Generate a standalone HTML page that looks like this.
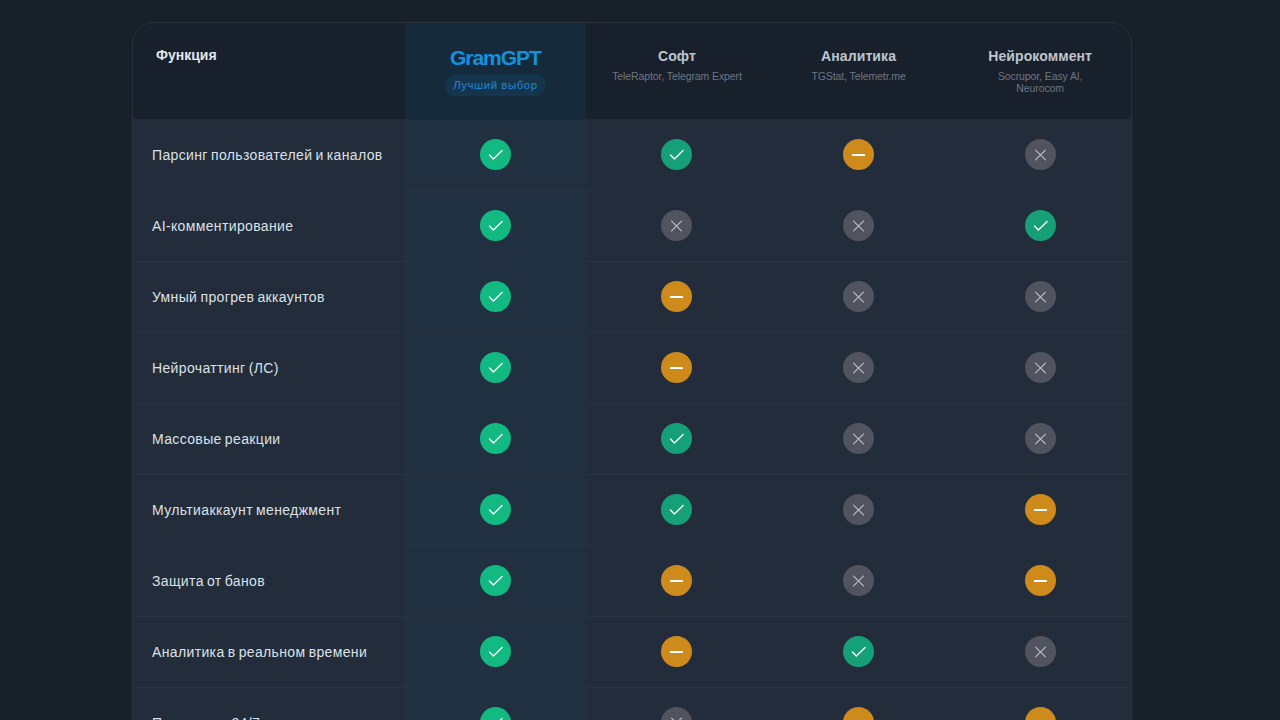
<!DOCTYPE html>
<html><head><meta charset="utf-8">
<style>
*{box-sizing:border-box;margin:0;padding:0}
html,body{width:1280px;height:720px;overflow:hidden;background:#18202a;font-family:"Liberation Sans",sans-serif}
.card{position:absolute;left:132px;top:22px;width:1000px;height:1000px;border:1px solid #2a313c;border-radius:22px;overflow:hidden;background:#222c3a}
.grid{display:grid;grid-template-columns:271.6px 181.6px 181.6px 181.6px 181.6px}
.head{background:#18202b;height:97px;border-bottom:1px solid #242b36}
.head>div{position:relative;text-align:center}
.head .f{text-align:left;padding:24px 0 0 23px;font-weight:bold;font-size:14px;color:#e4e8ee}
.head .g{background:#152a3a}
.gt{font-weight:bold;font-size:21px;letter-spacing:-1px;color:#1292de;padding-top:22px;line-height:25px}
.pill{display:inline-block;margin-top:4px;height:22px;line-height:22px;padding:0 8.5px;letter-spacing:0.5px;border-radius:11px;background:#15354c;color:#1f86d2;font-size:11.5px}
.ht{font-weight:bold;font-size:14px;letter-spacing:0.1px;color:#bec5ce;padding-top:25px;line-height:17px}
.hs{font-size:10.5px;color:#6e7682;margin-top:5px;line-height:12px;letter-spacing:-0.1px}
.row{height:71px;border-bottom:1px solid #29323f}
.row>div{display:flex;align-items:center;justify-content:center}
.row .f{justify-content:flex-start;padding-left:19px;font-size:14px;color:#dce1e7;letter-spacing:0.36px;word-spacing:-1.1px}
.row .g{background:#213040}
.ic{position:relative;top:-0.4px;width:31px;height:31px;border-radius:50%;display:flex;align-items:center;justify-content:center}
.ok1{background:#12b981}
.ok{background:#15a077}
.no{background:#51535e}
.pa{background:#cf8a1c}
</style></head><body>
<div class="card">
<div class="grid head">
 <div class="f">Функция</div>
 <div class="g"><div class="gt">GramGPT</div><div class="pill">Лучший выбор</div></div>
 <div><div class="ht">Софт</div><div class="hs">TeleRaptor, Telegram Expert</div></div>
 <div><div class="ht">Аналитика</div><div class="hs">TGStat, Telemetr.me</div></div>
 <div><div class="ht">Нейрокоммент</div><div class="hs">Socrupor, Easy AI,<br>Neurocom</div></div>
</div>
<div class="grid row"><div class="f">Парсинг пользователей и каналов</div><div class="g"><div class="ic ok1"><svg width="32" height="32" viewBox="0 0 32 32"><path d="M9.8 16 L13.8 20.2 L22.8 11.4" fill="none" stroke="#fff" stroke-width="1.35" stroke-linecap="round" stroke-linejoin="round"/></svg></div></div><div><div class="ic ok"><svg width="32" height="32" viewBox="0 0 32 32"><path d="M9.8 16 L13.8 20.2 L22.8 11.4" fill="none" stroke="#fff" stroke-width="1.35" stroke-linecap="round" stroke-linejoin="round"/></svg></div></div><div><div class="ic pa"><svg width="32" height="32" viewBox="0 0 32 32"><rect x="9.3" y="15" width="13.4" height="2.1" rx="0.6" fill="#fff"/></svg></div></div><div><div class="ic no"><svg width="32" height="32" viewBox="0 0 32 32"><path d="M10.9 10.9 L21.1 21.1 M21.1 10.9 L10.9 21.1" fill="none" stroke="#b9bcc4" stroke-width="1.25" stroke-linecap="round"/></svg></div></div></div>
<div class="grid row"><div class="f">AI-комментирование</div><div class="g"><div class="ic ok1"><svg width="32" height="32" viewBox="0 0 32 32"><path d="M9.8 16 L13.8 20.2 L22.8 11.4" fill="none" stroke="#fff" stroke-width="1.35" stroke-linecap="round" stroke-linejoin="round"/></svg></div></div><div><div class="ic no"><svg width="32" height="32" viewBox="0 0 32 32"><path d="M10.9 10.9 L21.1 21.1 M21.1 10.9 L10.9 21.1" fill="none" stroke="#b9bcc4" stroke-width="1.25" stroke-linecap="round"/></svg></div></div><div><div class="ic no"><svg width="32" height="32" viewBox="0 0 32 32"><path d="M10.9 10.9 L21.1 21.1 M21.1 10.9 L10.9 21.1" fill="none" stroke="#b9bcc4" stroke-width="1.25" stroke-linecap="round"/></svg></div></div><div><div class="ic ok"><svg width="32" height="32" viewBox="0 0 32 32"><path d="M9.8 16 L13.8 20.2 L22.8 11.4" fill="none" stroke="#fff" stroke-width="1.35" stroke-linecap="round" stroke-linejoin="round"/></svg></div></div></div>
<div class="grid row"><div class="f">Умный прогрев аккаунтов</div><div class="g"><div class="ic ok1"><svg width="32" height="32" viewBox="0 0 32 32"><path d="M9.8 16 L13.8 20.2 L22.8 11.4" fill="none" stroke="#fff" stroke-width="1.35" stroke-linecap="round" stroke-linejoin="round"/></svg></div></div><div><div class="ic pa"><svg width="32" height="32" viewBox="0 0 32 32"><rect x="9.3" y="15" width="13.4" height="2.1" rx="0.6" fill="#fff"/></svg></div></div><div><div class="ic no"><svg width="32" height="32" viewBox="0 0 32 32"><path d="M10.9 10.9 L21.1 21.1 M21.1 10.9 L10.9 21.1" fill="none" stroke="#b9bcc4" stroke-width="1.25" stroke-linecap="round"/></svg></div></div><div><div class="ic no"><svg width="32" height="32" viewBox="0 0 32 32"><path d="M10.9 10.9 L21.1 21.1 M21.1 10.9 L10.9 21.1" fill="none" stroke="#b9bcc4" stroke-width="1.25" stroke-linecap="round"/></svg></div></div></div>
<div class="grid row"><div class="f">Нейрочаттинг (ЛС)</div><div class="g"><div class="ic ok1"><svg width="32" height="32" viewBox="0 0 32 32"><path d="M9.8 16 L13.8 20.2 L22.8 11.4" fill="none" stroke="#fff" stroke-width="1.35" stroke-linecap="round" stroke-linejoin="round"/></svg></div></div><div><div class="ic pa"><svg width="32" height="32" viewBox="0 0 32 32"><rect x="9.3" y="15" width="13.4" height="2.1" rx="0.6" fill="#fff"/></svg></div></div><div><div class="ic no"><svg width="32" height="32" viewBox="0 0 32 32"><path d="M10.9 10.9 L21.1 21.1 M21.1 10.9 L10.9 21.1" fill="none" stroke="#b9bcc4" stroke-width="1.25" stroke-linecap="round"/></svg></div></div><div><div class="ic no"><svg width="32" height="32" viewBox="0 0 32 32"><path d="M10.9 10.9 L21.1 21.1 M21.1 10.9 L10.9 21.1" fill="none" stroke="#b9bcc4" stroke-width="1.25" stroke-linecap="round"/></svg></div></div></div>
<div class="grid row"><div class="f">Массовые реакции</div><div class="g"><div class="ic ok1"><svg width="32" height="32" viewBox="0 0 32 32"><path d="M9.8 16 L13.8 20.2 L22.8 11.4" fill="none" stroke="#fff" stroke-width="1.35" stroke-linecap="round" stroke-linejoin="round"/></svg></div></div><div><div class="ic ok"><svg width="32" height="32" viewBox="0 0 32 32"><path d="M9.8 16 L13.8 20.2 L22.8 11.4" fill="none" stroke="#fff" stroke-width="1.35" stroke-linecap="round" stroke-linejoin="round"/></svg></div></div><div><div class="ic no"><svg width="32" height="32" viewBox="0 0 32 32"><path d="M10.9 10.9 L21.1 21.1 M21.1 10.9 L10.9 21.1" fill="none" stroke="#b9bcc4" stroke-width="1.25" stroke-linecap="round"/></svg></div></div><div><div class="ic no"><svg width="32" height="32" viewBox="0 0 32 32"><path d="M10.9 10.9 L21.1 21.1 M21.1 10.9 L10.9 21.1" fill="none" stroke="#b9bcc4" stroke-width="1.25" stroke-linecap="round"/></svg></div></div></div>
<div class="grid row"><div class="f">Мультиаккаунт менеджмент</div><div class="g"><div class="ic ok1"><svg width="32" height="32" viewBox="0 0 32 32"><path d="M9.8 16 L13.8 20.2 L22.8 11.4" fill="none" stroke="#fff" stroke-width="1.35" stroke-linecap="round" stroke-linejoin="round"/></svg></div></div><div><div class="ic ok"><svg width="32" height="32" viewBox="0 0 32 32"><path d="M9.8 16 L13.8 20.2 L22.8 11.4" fill="none" stroke="#fff" stroke-width="1.35" stroke-linecap="round" stroke-linejoin="round"/></svg></div></div><div><div class="ic no"><svg width="32" height="32" viewBox="0 0 32 32"><path d="M10.9 10.9 L21.1 21.1 M21.1 10.9 L10.9 21.1" fill="none" stroke="#b9bcc4" stroke-width="1.25" stroke-linecap="round"/></svg></div></div><div><div class="ic pa"><svg width="32" height="32" viewBox="0 0 32 32"><rect x="9.3" y="15" width="13.4" height="2.1" rx="0.6" fill="#fff"/></svg></div></div></div>
<div class="grid row"><div class="f">Защита от банов</div><div class="g"><div class="ic ok1"><svg width="32" height="32" viewBox="0 0 32 32"><path d="M9.8 16 L13.8 20.2 L22.8 11.4" fill="none" stroke="#fff" stroke-width="1.35" stroke-linecap="round" stroke-linejoin="round"/></svg></div></div><div><div class="ic pa"><svg width="32" height="32" viewBox="0 0 32 32"><rect x="9.3" y="15" width="13.4" height="2.1" rx="0.6" fill="#fff"/></svg></div></div><div><div class="ic no"><svg width="32" height="32" viewBox="0 0 32 32"><path d="M10.9 10.9 L21.1 21.1 M21.1 10.9 L10.9 21.1" fill="none" stroke="#b9bcc4" stroke-width="1.25" stroke-linecap="round"/></svg></div></div><div><div class="ic pa"><svg width="32" height="32" viewBox="0 0 32 32"><rect x="9.3" y="15" width="13.4" height="2.1" rx="0.6" fill="#fff"/></svg></div></div></div>
<div class="grid row"><div class="f">Аналитика в реальном времени</div><div class="g"><div class="ic ok1"><svg width="32" height="32" viewBox="0 0 32 32"><path d="M9.8 16 L13.8 20.2 L22.8 11.4" fill="none" stroke="#fff" stroke-width="1.35" stroke-linecap="round" stroke-linejoin="round"/></svg></div></div><div><div class="ic pa"><svg width="32" height="32" viewBox="0 0 32 32"><rect x="9.3" y="15" width="13.4" height="2.1" rx="0.6" fill="#fff"/></svg></div></div><div><div class="ic ok"><svg width="32" height="32" viewBox="0 0 32 32"><path d="M9.8 16 L13.8 20.2 L22.8 11.4" fill="none" stroke="#fff" stroke-width="1.35" stroke-linecap="round" stroke-linejoin="round"/></svg></div></div><div><div class="ic no"><svg width="32" height="32" viewBox="0 0 32 32"><path d="M10.9 10.9 L21.1 21.1 M21.1 10.9 L10.9 21.1" fill="none" stroke="#b9bcc4" stroke-width="1.25" stroke-linecap="round"/></svg></div></div></div>
<div class="grid row"><div class="f">Поддержка 24/7</div><div class="g"><div class="ic ok1"><svg width="32" height="32" viewBox="0 0 32 32"><path d="M9.8 16 L13.8 20.2 L22.8 11.4" fill="none" stroke="#fff" stroke-width="1.35" stroke-linecap="round" stroke-linejoin="round"/></svg></div></div><div><div class="ic no"><svg width="32" height="32" viewBox="0 0 32 32"><path d="M10.9 10.9 L21.1 21.1 M21.1 10.9 L10.9 21.1" fill="none" stroke="#b9bcc4" stroke-width="1.25" stroke-linecap="round"/></svg></div></div><div><div class="ic pa"><svg width="32" height="32" viewBox="0 0 32 32"><rect x="9.3" y="15" width="13.4" height="2.1" rx="0.6" fill="#fff"/></svg></div></div><div><div class="ic pa"><svg width="32" height="32" viewBox="0 0 32 32"><rect x="9.3" y="15" width="13.4" height="2.1" rx="0.6" fill="#fff"/></svg></div></div></div>
</div>
</body></html>
